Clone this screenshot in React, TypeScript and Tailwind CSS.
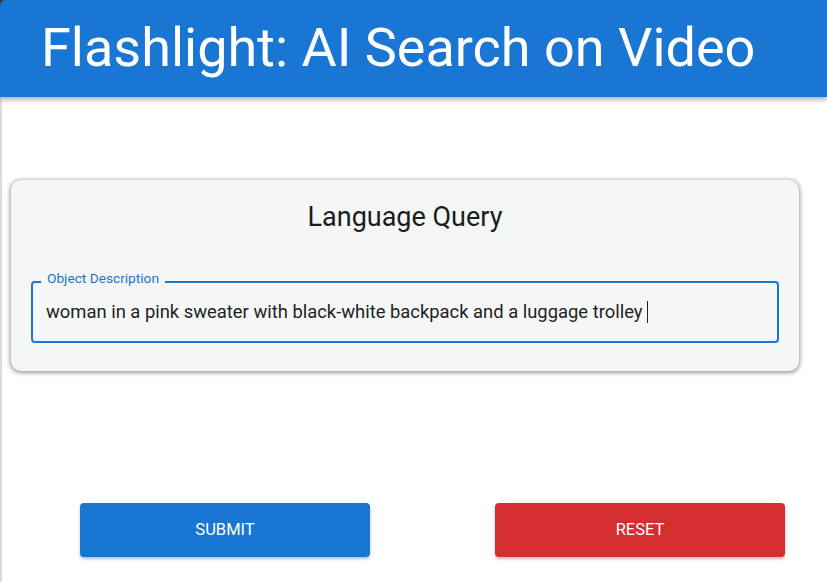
import React from "react";

export default function App() {
  return (
    <div
      className="w-[827px] h-[582px] overflow-hidden bg-[#3a3a3a]"
      style={{ fontFamily: "Roboto, 'Liberation Sans', sans-serif" }}
    >
      <header className="relative z-10 h-[97px] rounded-tl-[6px] bg-[#1976d2] pl-[41px] shadow-[0_3px_5px_rgba(0,0,0,0.3)]">
        <h1 className="pt-[16px] text-[54px] leading-[64px] text-white font-normal">
          Flashlight: AI Search on Video
        </h1>
      </header>

      <main className="h-[485px] bg-white border-l-2 border-[#dcdcdc] pt-[83px]">
        <section className="ml-[9px] mr-[28px] h-[191px] rounded-[10px] bg-[#f5f7f7] shadow-[0_1px_4px_1px_rgba(0,0,0,0.4)] px-[20px] pt-[20px]">
          <h2 className="text-center text-[27px] leading-[34px] text-[#1c1c1c]">
            Language Query
          </h2>
          <div className="relative mt-[47px] h-[62px] rounded-[4px] border-2 border-[#1976d2] flex items-center pl-[13px]">
            <span className="absolute -top-[14px] left-[8px] bg-[#f5f7f7] px-[6px] text-[13.7px] leading-[18px] text-[#1976d2]">
              Object Description
            </span>
            <span className="text-[18.4px] text-[#222] flex items-center">
              woman in a pink sweater with black-white backpack and a luggage trolley
              <span className="ml-[5px] inline-block w-px h-[22px] bg-[#222]" />
            </span>
          </div>
        </section>

        <div className="flex pl-[78px] gap-[125px] mt-[132px]">
          <button className="w-[290px] h-[54px] rounded-[4px] bg-[#1976d2] text-white text-[16.5px] uppercase shadow-[0_2px_3px_rgba(0,0,0,0.25)]">
            Submit
          </button>
          <button className="w-[290px] h-[54px] rounded-[4px] bg-[#d32f2f] text-white text-[16.5px] uppercase shadow-[0_2px_3px_rgba(0,0,0,0.25)]">
            Reset
          </button>
        </div>
      </main>
    </div>
  );
}
